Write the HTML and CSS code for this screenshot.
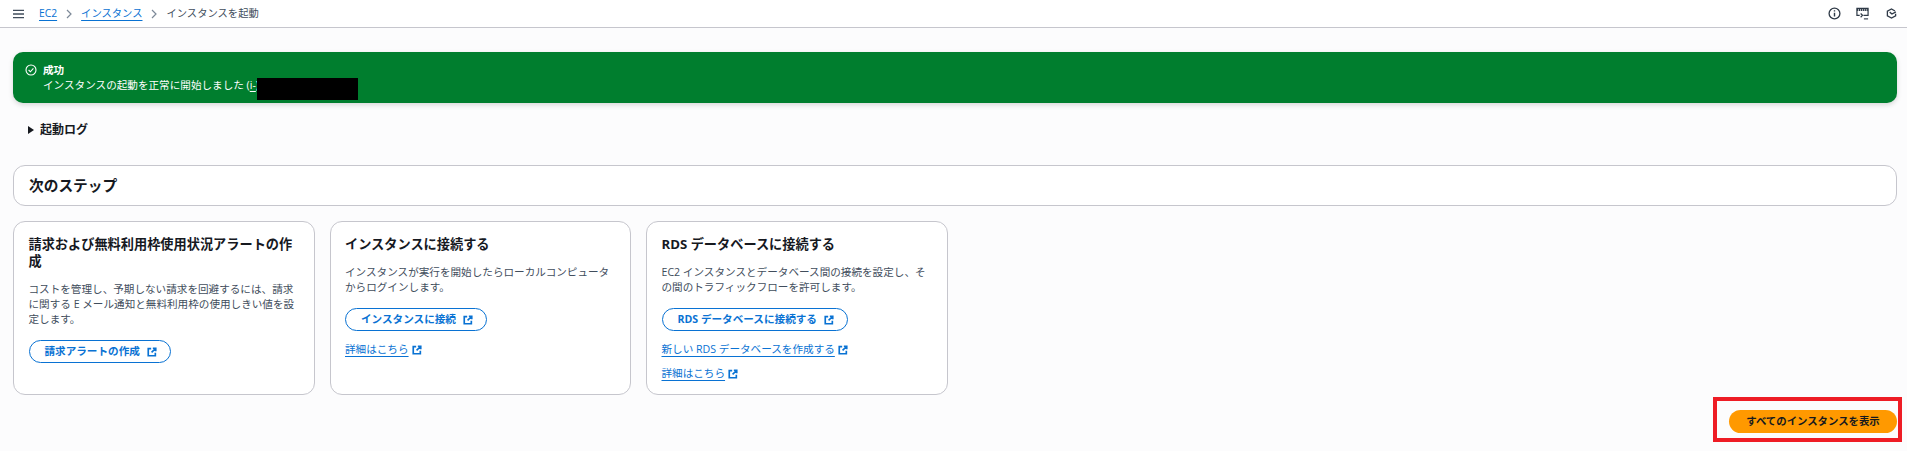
FILE: index.html
```html
<!DOCTYPE html>
<html lang="ja">
<head>
<meta charset="UTF-8">
<meta name="viewport" content="width=device-width, initial-scale=1.0">
<title>インスタンスを起動</title>
<link rel="stylesheet" href="styles.css">
</head>
<body>
<svg class="svg-defs" width="0" height="0">
  <symbol id="ext" viewBox="0 0 12 12">
    <path d="M5 2H1.500v8.500H10V7M7 1.500h3.500V5M10.500 1.500 5.500 6.500" fill="none" stroke="currentColor" stroke-width="2"/>
  </symbol>
</svg>

<header class="topbar">
  <svg class="menu-icon" viewBox="0 0 12 10"><path d="M0 1h12M0 5h12M0 9h12" stroke="#414d5c" stroke-width="1.4"/></svg>
  <nav class="crumbs">
    <a href="#">EC2</a>
    <svg class="crumb-sep" viewBox="0 0 6 10"><path d="M1 1l4 4-4 4" fill="none" stroke="#7d8998" stroke-width="1.2"/></svg>
    <a href="#">インスタンス</a>
    <svg class="crumb-sep" viewBox="0 0 6 10"><path d="M1 1l4 4-4 4" fill="none" stroke="#7d8998" stroke-width="1.2"/></svg>
    <span>インスタンスを起動</span>
  </nav>
  <div class="top-icons">
    <svg viewBox="0 0 12 12"><circle cx="6" cy="6" r="5" fill="none" stroke="#2f3a47" stroke-width="1.200"/><path d="M6 5.200v3.600M6 3v1.200" stroke="#2f3a47" stroke-width="1.300"/></svg>
    <svg viewBox="0 0 14 13"><path d="M4 8.500H1V1h12v7.500H8" fill="none" stroke="#2f3a47" stroke-width="1.300"/><path d="M1 2.600h12" stroke="#2f3a47" stroke-width="2.200" stroke-dasharray="1.500 .7"/><path d="M5 6.500l2 2-2 2" fill="none" stroke="#2f3a47" stroke-width="1.300"/><path d="M8.500 12.300H13" stroke="#2f3a47" stroke-width="1.200"/></svg>
    <svg viewBox="0 0 12 12"><path d="M9.800 3.200 6 1 1.500 3.500v5L6 11l4.500-2.500V6.300" fill="none" stroke="#2f3a47" stroke-width="1.400"/><path d="M4 4.500l2.500 2 4.300-2.300" fill="none" stroke="#2f3a47" stroke-width="1.400"/></svg>
  </div>
</header>

<main class="content">
  <div class="flash">
    <svg class="flash-icon" viewBox="0 0 12 12"><circle cx="6" cy="6" r="5" fill="none" stroke="#fff" stroke-width="1.100"/><path d="M3.600 6l1.800 1.800 3-3.400" fill="none" stroke="#fff" stroke-width="1.100"/></svg>
    <div>
      <div class="flash-title">成功</div>
      <div class="flash-text">インスタンスの起動を正常に開始しました (<span class="flash-id">i-<span class="redact"></span></span>)</div>
    </div>
  </div>

  <div class="log-toggle"><span class="caret"></span>起動ログ</div>

  <section class="steps-head"><h2>次のステップ</h2></section>

  <div class="cards">
    <div class="card">
      <h3>請求および無料利用枠使用状況アラートの作成</h3>
      <p>コストを管理し、予期しない請求を回避するには、請求に関する E メール通知と無料利用枠の使用しきい値を設定します。</p>
      <a class="btn" href="#">請求アラートの作成<svg class="ext"><use href="#ext"/></svg></a>
    </div>
    <div class="card">
      <h3>インスタンスに接続する</h3>
      <p>インスタンスが実行を開始したらローカルコンピュータからログインします。</p>
      <a class="btn" href="#">インスタンスに接続<svg class="ext"><use href="#ext"/></svg></a>
      <div class="link-row"><a href="#">詳細はこちら</a><svg class="ext"><use href="#ext"/></svg></div>
    </div>
    <div class="card">
      <h3>RDS データベースに接続する</h3>
      <p>EC2 インスタンスとデータベース間の接続を設定し、その間のトラフィックフローを許可します。</p>
      <a class="btn" href="#">RDS データベースに接続する<svg class="ext"><use href="#ext"/></svg></a>
      <div class="link-row"><a href="#">新しい RDS データベースを作成する</a><svg class="ext"><use href="#ext"/></svg></div>
      <div class="link-row"><a href="#">詳細はこちら</a><svg class="ext"><use href="#ext"/></svg></div>
    </div>
  </div>

  <div class="footer-row">
    <div class="highlight">
      <a class="btn-primary" href="#">すべてのインスタンスを表示</a>
    </div>
  </div>
</main>
</body>
</html>
```

FILE: styles.css
```css
body {
  margin: 0;
  height: 451px;
  overflow: hidden;
  background-color: #fcfcfd;
  color: #16191f;
  font-family: "Open Sans", "Noto Sans CJK JP", sans-serif;
  font-size: 10.6px;
  line-height: 15px;
}

.svg-defs {
  display: block;
  height: 0;
}

a {
  color: #0972d3;
}

.topbar {
  height: 27px;
  display: flex;
  align-items: center;
  padding: 0 10px 0 13px;
  background-color: #fff;
  border-bottom: 1px solid #c6c6cd;
}

.menu-icon {
  width: 11px;
  height: 10px;
  margin-right: 15px;
}

.crumbs {
  display: flex;
  align-items: center;
  color: #414d5c;
  font-size: 10.3px;
}

.crumbs a {
  text-underline-offset: 3px;
}

.crumb-sep {
  width: 6px;
  height: 10px;
  margin: 0 9px;
}

.top-icons {
  margin-left: auto;
  display: flex;
  align-items: center;
  gap: 15px;
}

.top-icons svg {
  width: 13px;
  height: 13px;
}

.top-icons svg:last-child {
  width: 11px;
  margin-left: 2px;
}

.content {
  padding: 24px 10px 0 13px;
}

.flash {
  height: 51px;
  display: flex;
  align-items: center;
  gap: 6px;
  padding: 0 12px;
  box-sizing: border-box;
  background-color: #007e2e;
  color: #fff;
  border-radius: 10px;
  box-shadow: 0 2px 5px rgba(0, 0, 0, 0.15);
}

.flash-icon {
  width: 12px;
  height: 12px;
  align-self: flex-start;
  margin-top: 12px;
}

.flash-title {
  font-weight: 700;
}

.flash-id {
  position: relative;
  text-decoration: underline;
  text-underline-offset: 2px;
}

.redact {
  position: absolute;
  left: 7px;
  top: 0;
  width: 101px;
  height: 22px;
  background-color: #000;
}

.log-toggle {
  display: flex;
  align-items: center;
  margin: 18px 0 0 15px;
  font-size: 12px;
  font-weight: 700;
  height: 17px;
}

.caret {
  width: 0;
  height: 0;
  margin-right: 6px;
  border-left: 6px solid #16191f;
  border-top: 4px solid transparent;
  border-bottom: 4px solid transparent;
}

.steps-head {
  height: 41px;
  margin-top: 27px;
  display: flex;
  align-items: center;
  padding: 0 15px;
  box-sizing: border-box;
  background-color: #fff;
  border: 1px solid #c6c6cd;
  border-radius: 12px;
}

h2 {
  margin: 0;
  font-size: 14.7px;
  font-weight: 700;
}

.cards {
  display: flex;
  gap: 15px;
  margin-top: 15px;
}

.card {
  width: 301.5px;
  height: 174px;
  box-sizing: border-box;
  padding: 14px 14px 0 14.5px;
  background-color: #fff;
  border: 1px solid #c6c6cd;
  border-radius: 12px;
}

h3 {
  margin: 0 0 12px;
  font-size: 13.2px;
  line-height: 17px;
  font-weight: 700;
}

.card p {
  margin: 0 0 13px;
  color: #414d5c;
}

.btn {
  display: inline-flex;
  align-items: center;
  height: 23px;
  box-sizing: border-box;
  padding: 0 13px 0 15px;
  border: 1px solid #0972d3;
  border-radius: 12px;
  font-weight: 700;
  text-decoration: none;
}

.ext {
  width: 10px;
  height: 10px;
  margin-left: 7px;
  color: #0972d3;
}

.link-row {
  display: flex;
  align-items: center;
  margin-top: 11px;
}

.link-row + .link-row {
  margin-top: 9px;
}

.link-row a {
  text-underline-offset: 3px;
}

.link-row .ext {
  margin-left: 3px;
}

.footer-row {
  display: flex;
  justify-content: flex-end;
  margin: 2px -5px 0 0;
}

.highlight {
  padding: 9px 1px 5px 12px;
  border: 4px solid #ee1c25;
}

.btn-primary {
  display: flex;
  align-items: center;
  justify-content: center;
  width: 168px;
  height: 23px;
  border-radius: 12px;
  background-color: #ff9900;
  color: #16191f;
  font-size: 10.4px;
  font-weight: 700;
  text-decoration: none;
}
```
